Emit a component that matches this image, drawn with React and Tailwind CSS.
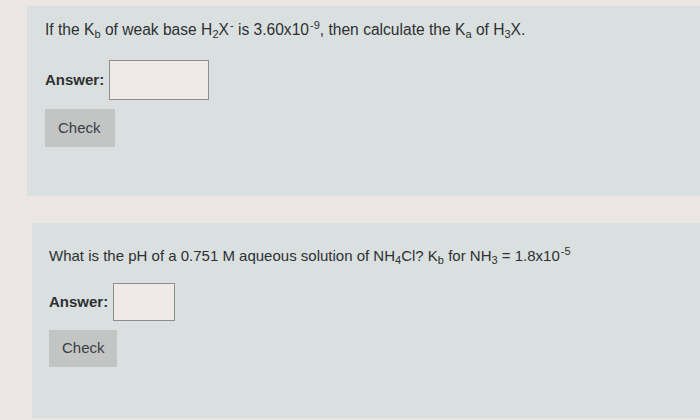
import React from "react";

const font = { fontFamily: '"Liberation Sans", Arial, sans-serif' };

function Sub({ children }) {
  return <sub className="text-[11px] align-baseline relative top-[3px]">{children}</sub>;
}
function Sup({ children }) {
  return <sup className="text-[11px] align-baseline relative -top-[6px] ml-[1px]">{children}</sup>;
}

export default function App() {
  return (
    <div className="w-[700px] h-[420px] bg-[#ebe6e4] overflow-hidden text-[#2e3033]" style={font}>
      <div className="ml-[27px] mt-[6px] h-[190px] bg-[#d9e0df] pl-[18px] pt-[13px]">
        <div className="text-[15.6px] leading-[22px]">
          If the K<Sub>b</Sub> of weak base H<Sub>2</Sub>X<Sup>-</Sup> is 3.60x10<Sup>-9</Sup>, then calculate the K<Sub>a</Sub> of H<Sub>3</Sub>X.
        </div>
        <div className="flex items-center mt-[19px]">
          <span className="text-[15px] font-bold">Answer:</span>
          <div className="ml-[5px] w-[100px] h-[40px] bg-[#efe9e7] border border-[#8d8d8d]" />
        </div>
        <div className="mt-[9px] w-[70px] h-[38px] bg-[#c3c5c5] flex items-center pl-[13px] text-[15px] text-[#3a3c44]">
          Check
        </div>
      </div>
      <div className="ml-[32px] mt-[27px] h-[195px] bg-[#d9e0df] pl-[17px] pt-[22px]">
        <div className="text-[15px] leading-[22px]">
          What is the pH of a 0.751 M aqueous solution of NH<Sub>4</Sub>Cl? K<Sub>b</Sub> for NH<Sub>3</Sub> = 1.8x10<Sup>-5</Sup>
        </div>
        <div className="flex items-center mt-[16px]">
          <span className="text-[15px] font-bold">Answer:</span>
          <div className="ml-[5px] w-[62px] h-[38px] bg-[#efe9e7] border border-[#8d8d8d]" />
        </div>
        <div className="mt-[9px] w-[68px] h-[37px] bg-[#c3c5c5] flex items-center pl-[13px] text-[15px] text-[#3a3c44]">
          Check
        </div>
      </div>
    </div>
  );
}
